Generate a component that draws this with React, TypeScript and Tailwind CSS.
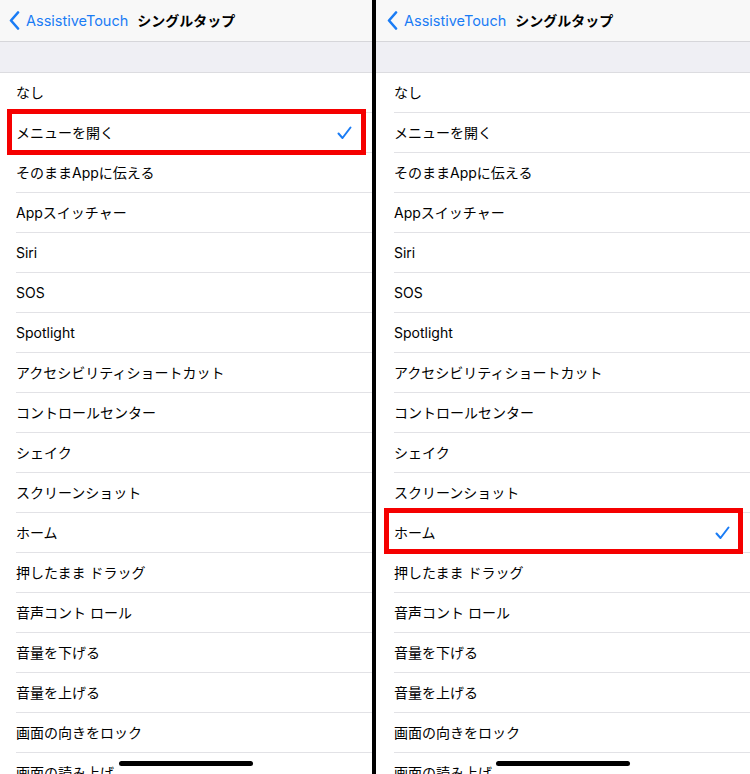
import React from 'react';

const items = [
  'なし',
  'メニューを開く',
  'そのままAppに伝える',
  'Appスイッチャー',
  'Siri',
  'SOS',
  'Spotlight',
  'アクセシビリティショートカット',
  'コントロールセンター',
  'シェイク',
  'スクリーンショット',
  'ホーム',
  '押したまま ドラッグ',
  '音声コント ロール',
  '音量を下げる',
  '音量を上げる',
  '画面の向きをロック',
  '画面の読み上げ',
];

function Check() {
  return (
    <svg width="15" height="14" viewBox="0 0 15 14" fill="none">
      <path d="M1.5 7.5 L5.5 12 L13.5 1.5" stroke="#1a7cf5" strokeWidth="2" strokeLinecap="round" strokeLinejoin="round" />
    </svg>
  );
}

function Panel({ selected, inset, boxClass }: { selected: number; inset: string; boxClass: string }) {
  return (
    <div className="relative h-full flex-1 overflow-hidden bg-white">
      <div className="flex h-[42px] items-center border-b border-[#d6d6da] bg-[#f8f8f8]">
        <div className={`flex items-center ${inset === 'pl-4' ? 'pl-[9px]' : 'pl-[11px]'}`}>
          <svg width="11" height="19" viewBox="0 0 11 19" fill="none">
            <path d="M9 1.5 L2 9.5 L9 17.5" stroke="#1a7cf5" strokeWidth="2.6" strokeLinecap="round" strokeLinejoin="round" />
          </svg>
          <span className="ml-[6px] text-[14.5px] text-[#1a7cf5]">AssistiveTouch</span>
        </div>
        <span className="ml-[9px] text-[14px] font-bold text-black">シングルタップ</span>
      </div>
      <div className="h-[31px] border-b border-[#dcdce0] bg-[#efeff4]" />
      <ul>
        {items.map((label, idx) => (
          <li key={idx} className={`relative ${inset}`}>
            <div className="flex h-[40px] items-center border-b border-[#e2e2e6] pr-5 text-[14px] text-black">
              <span className="flex-1">{label}</span>
              {idx === selected && <Check />}
            </div>
            {idx === selected && <div className={`pointer-events-none absolute border-[5px] border-[#f50000] ${boxClass}`} />}
          </li>
        ))}
      </ul>
      <div className="absolute bottom-[8px] left-1/2 h-[5px] w-[134px] -translate-x-1/2 rounded-full bg-black" />
    </div>
  );
}

export default function App() {
  return (
    <div
      className="flex h-[774px] w-[750px] overflow-hidden bg-white"
      style={{ fontFamily: 'Inter, "Noto Sans CJK JP", sans-serif' }}
    >
      <div className="w-[372px] shrink-0">
        <Panel selected={1} inset="pl-4" boxClass="-top-[4px] -bottom-[2px] left-[7px] right-[6px]" />
      </div>
      <div className="w-[4px] shrink-0 bg-black" />
      <div className="w-[374px] shrink-0">
        <Panel selected={11} inset="pl-[18px]" boxClass="-top-[5px] -bottom-[1px] left-[8px] right-[7px]" />
      </div>
    </div>
  );
}
